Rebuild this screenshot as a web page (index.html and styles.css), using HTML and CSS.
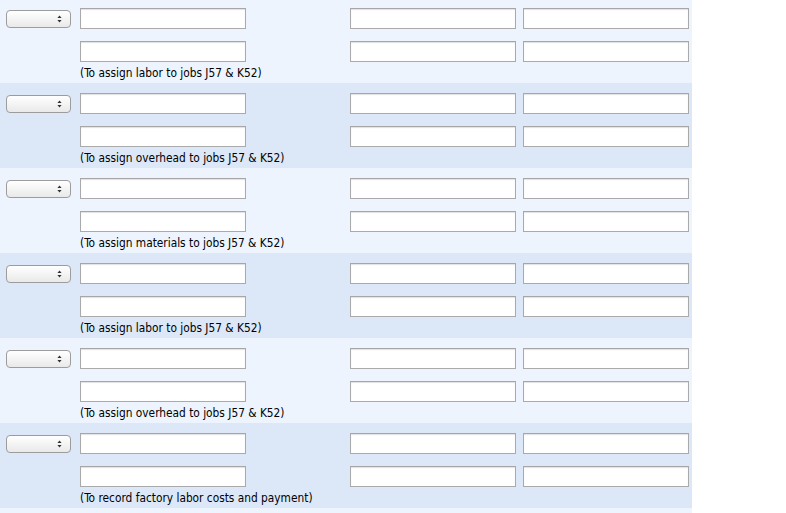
FILE: index.html
```html
<!DOCTYPE html>
<html>
<head>
<meta charset="utf-8">
<link rel="stylesheet" href="styles.css">
</head>
<body>
<div class="sheet">
  <div class="entry light">
    <div class="sel"><svg class="arr" width="5" height="8" viewBox="0 0 5 8"><path d="M2.5 0.5 L4.6 3 L0.4 3 Z M2.5 7.5 L4.6 5 L0.4 5 Z" fill="#333"/></svg></div>
    <input class="box c2" type="text"><input class="box c3" type="text"><input class="box c4" type="text">
    <input class="box c2" type="text"><input class="box c3" type="text"><input class="box c4" type="text">
    <div class="note">(To assign labor to jobs J57 &amp; K52)</div>
  </div>
  <div class="entry dark">
    <div class="sel"><svg class="arr" width="5" height="8" viewBox="0 0 5 8"><path d="M2.5 0.5 L4.6 3 L0.4 3 Z M2.5 7.5 L4.6 5 L0.4 5 Z" fill="#333"/></svg></div>
    <input class="box c2" type="text"><input class="box c3" type="text"><input class="box c4" type="text">
    <input class="box c2" type="text"><input class="box c3" type="text"><input class="box c4" type="text">
    <div class="note">(To assign overhead to jobs J57 &amp; K52)</div>
  </div>
  <div class="entry light">
    <div class="sel"><svg class="arr" width="5" height="8" viewBox="0 0 5 8"><path d="M2.5 0.5 L4.6 3 L0.4 3 Z M2.5 7.5 L4.6 5 L0.4 5 Z" fill="#333"/></svg></div>
    <input class="box c2" type="text"><input class="box c3" type="text"><input class="box c4" type="text">
    <input class="box c2" type="text"><input class="box c3" type="text"><input class="box c4" type="text">
    <div class="note">(To assign materials to jobs J57 &amp; K52)</div>
  </div>
  <div class="entry dark">
    <div class="sel"><svg class="arr" width="5" height="8" viewBox="0 0 5 8"><path d="M2.5 0.5 L4.6 3 L0.4 3 Z M2.5 7.5 L4.6 5 L0.4 5 Z" fill="#333"/></svg></div>
    <input class="box c2" type="text"><input class="box c3" type="text"><input class="box c4" type="text">
    <input class="box c2" type="text"><input class="box c3" type="text"><input class="box c4" type="text">
    <div class="note">(To assign labor to jobs J57 &amp; K52)</div>
  </div>
  <div class="entry light">
    <div class="sel"><svg class="arr" width="5" height="8" viewBox="0 0 5 8"><path d="M2.5 0.5 L4.6 3 L0.4 3 Z M2.5 7.5 L4.6 5 L0.4 5 Z" fill="#333"/></svg></div>
    <input class="box c2" type="text"><input class="box c3" type="text"><input class="box c4" type="text">
    <input class="box c2" type="text"><input class="box c3" type="text"><input class="box c4" type="text">
    <div class="note">(To assign overhead to jobs J57 &amp; K52)</div>
  </div>
  <div class="entry dark">
    <div class="sel"><svg class="arr" width="5" height="8" viewBox="0 0 5 8"><path d="M2.5 0.5 L4.6 3 L0.4 3 Z M2.5 7.5 L4.6 5 L0.4 5 Z" fill="#333"/></svg></div>
    <input class="box c2" type="text"><input class="box c3" type="text"><input class="box c4" type="text">
    <input class="box c2" type="text"><input class="box c3" type="text"><input class="box c4" type="text">
    <div class="note">(To record factory labor costs and payment)</div>
  </div>
  <div class="entry light tail"></div>
</div>
</body>
</html>
```
FILE: styles.css
```css
html, body {
  margin: 0;
  padding: 0;
  background: #ffffff;
}
.sheet {
  width: 692px;
  margin-top: -2px;
  font-family: "DejaVu Sans Condensed", "DejaVu Sans", sans-serif;
  font-size: 11.8px;
  color: #000;
}
.entry {
  display: grid;
  grid-template-columns: 65px 166px 166px 166px;
  grid-template-rows: 21px 21px auto;
  column-gap: 0;
  row-gap: 12px;
  padding: 10px 0 4px 6px;
  height: 85px;
  box-sizing: border-box;
  align-items: start;
}
.light { background: #edf4fd; }
.dark { background: #dce8f8; }
.tail { height: 5px; padding: 0; }
.sel {
  grid-column: 1;
  grid-row: 1;
  align-self: center;
  height: 18px;
  box-sizing: border-box;
  border: 1px solid #9c9c9c;
  border-radius: 4px;
  background: linear-gradient(#ffffff, #e9e9e9);
  display: flex;
  align-items: center;
  justify-content: flex-end;
  padding-right: 8px;
}
.arr { display: block; }
.box {
  margin: 0;
  width: 166px;
  height: 21px;
  box-sizing: border-box;
  border: 1px solid #aaaaaa;
  border-top-color: #a6a6a6;
  box-shadow: inset 0 1px 1px #e2e2e2;
  background: #ffffff;
  padding: 0;
}
.c2 { grid-column: 2; margin-left: 9px; }
.c3 { grid-column: 3; margin-left: 113px; }
.c4 { grid-column: 4; margin-left: 120px; }
.note {
  grid-column: 2 / span 3;
  grid-row: 3;
  margin-left: 9px;
  margin-top: -9px;
  line-height: 16px;
  white-space: nowrap;
}
```
